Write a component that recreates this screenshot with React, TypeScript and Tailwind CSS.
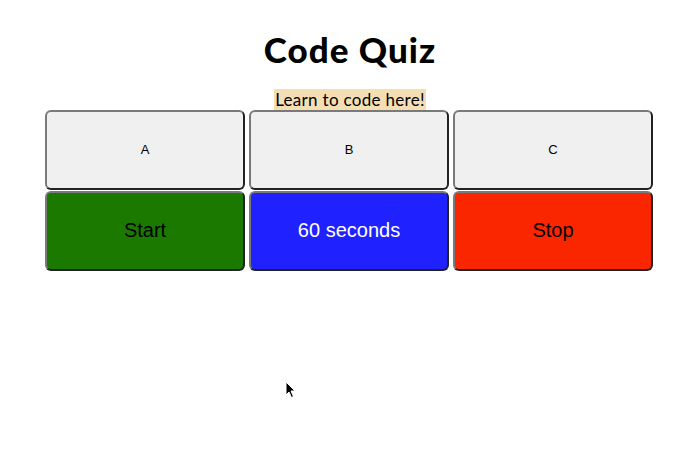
const btn =
  "w-[200px] h-[80px] rounded-[6px] border-2 border-t-[#7a7a7a] border-l-[#7a7a7a] border-r-[#222] border-b-[#222] flex items-center justify-center font-['Liberation_Sans',Arial,sans-serif]";

export default function App() {
  return (
    <div className="w-[700px] h-[450px] bg-white relative overflow-hidden">
      <div className="flex flex-col items-center pt-[30px]">
        <h1 className="font-['Lato',sans-serif] font-black text-[35px] leading-[38px] text-black tracking-[1px]">
          Code Quiz
        </h1>
        <p className="mt-[21px] bg-[#f5deb3] px-[1px] font-['Lato',sans-serif] text-[17px] leading-[21px] text-black tracking-[0.3px]">
          Learn to code here!
        </p>
        <div className="flex flex-col gap-[1px] ml-[-2px]">
          <div className="flex gap-[4px]">
            <button className={`${btn} bg-[#f0f0f0] text-[13px] text-black`}>A</button>
            <button className={`${btn} bg-[#f0f0f0] text-[13px] text-black`}>B</button>
            <button className={`${btn} bg-[#f0f0f0] text-[13px] text-black`}>C</button>
          </div>
          <div className="flex gap-[4px]">
            <button className={`${btn} bg-[#1b7900] text-[20px] leading-[20px] pb-[2px] text-black`}>Start</button>
            <button className={`${btn} bg-[#1f22ff] text-[20px] leading-[20px] pb-[2px] text-white`}>60 seconds</button>
            <button className={`${btn} bg-[#fa2600] text-[20px] leading-[20px] pb-[2px] text-black`}>Stop</button>
          </div>
        </div>
      </div>
      <svg className="absolute left-[285px] top-[381px]" width="12" height="18" viewBox="0 0 12 18">
        <path d="M1 1 L1 14 L4 11 L6.5 16.5 L8.5 15.5 L6 10 L10 10 Z" fill="#000" stroke="#fff" strokeWidth="1" />
      </svg>
    </div>
  );
}
